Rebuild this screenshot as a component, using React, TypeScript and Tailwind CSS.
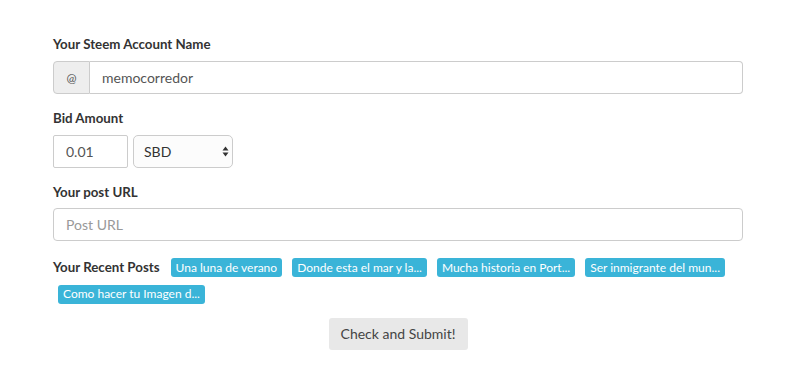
import { useState } from "react";

const posts = [
  "Una luna de verano",
  "Donde esta el mar y la...",
  "Mucha historia en Port...",
  "Ser inmigrante del mun...",
  "Como hacer tu Imagen d...",
];

function Label({ children }: { children: React.ReactNode }) {
  return (
    <label className="block text-[13.3px] leading-[18px] font-bold text-[#333]">
      {children}
    </label>
  );
}

export default function App() {
  const [account, setAccount] = useState("memocorredor");
  const [amount, setAmount] = useState("0.01");
  const [currency, setCurrency] = useState("SBD");
  const [url, setUrl] = useState("");

  return (
    <div
      className="min-h-[378px] w-full bg-white pt-[35px]"
      style={{ fontFamily: "Lato, 'Open Sans', sans-serif" }}
    >
      <form className="mx-auto w-[690px]" onSubmit={(e) => e.preventDefault()}>
        <Label>Your Steem Account Name</Label>
        <div className="mt-[8px] flex h-[33px] w-full">
          <span className="flex w-[37px] items-center justify-center rounded-l-[4px] border border-[#ccc] bg-[#eee] text-[12px] text-[#555]">
            @
          </span>
          <input
            value={account}
            onChange={(e) => setAccount(e.target.value)}
            className="h-full flex-1 rounded-r-[4px] border border-l-0 border-[#ccc] bg-white px-[12px] text-[14px] text-[#555] outline-none"
          />
        </div>

        <div className="mt-[15px]">
          <Label>Bid Amount</Label>
        </div>
        <div className="mt-[8px] flex h-[33px] gap-[5px]">
          <input
            value={amount}
            onChange={(e) => setAmount(e.target.value)}
            className="h-full w-[75px] rounded-[2px] border border-[#ccc] bg-white px-[12px] text-[14px] text-[#555] outline-none"
          />
          <div className="relative h-full w-[100px]">
            <select
              value={currency}
              onChange={(e) => setCurrency(e.target.value)}
              className="h-full w-full appearance-none rounded-[5px] border border-[#ccc] bg-[#fcfcfc] pl-[10px] text-[14px] text-[#333] outline-none"
            >
              <option>SBD</option>
              <option>STEEM</option>
            </select>
            <svg
              className="pointer-events-none absolute right-[4px] top-[11px]"
              width="7"
              height="11"
              viewBox="0 0 7 11"
            >
              <path d="M3.5 0.5 L6.5 4.5 H0.5 Z" fill="#333" />
              <path d="M3.5 10.5 L6.5 6.5 H0.5 Z" fill="#333" />
            </svg>
          </div>
        </div>

        <div className="mt-[15px]">
          <Label>Your post URL</Label>
        </div>
        <input
          value={url}
          onChange={(e) => setUrl(e.target.value)}
          placeholder="Post URL"
          className="mt-[7px] h-[33px] w-full rounded-[4px] border border-[#ccc] bg-white px-[12px] text-[14px] text-[#555] outline-none placeholder:text-[#999]"
        />

        <div className="mt-[17px] flex flex-wrap items-center gap-y-[7px]">
          <span className="mr-[6px] text-[13.3px] font-bold text-[#333]">
            Your Recent Posts
          </span>
          {posts.map((p) => (
            <span
              key={p}
              className="mx-[5px] flex h-[19px] items-center rounded-[3px] bg-[#3ab4d8] px-[5px] text-[12px] text-white"
            >
              {p}
            </span>
          ))}
        </div>

        <div className="mt-[14px] flex justify-center">
          <button
            type="submit"
            className="h-[32px] w-[139px] rounded-[3px] bg-[#e8e8e8] text-[14px] text-[#444]"
          >
            Check and Submit!
          </button>
        </div>
      </form>
    </div>
  );
}
